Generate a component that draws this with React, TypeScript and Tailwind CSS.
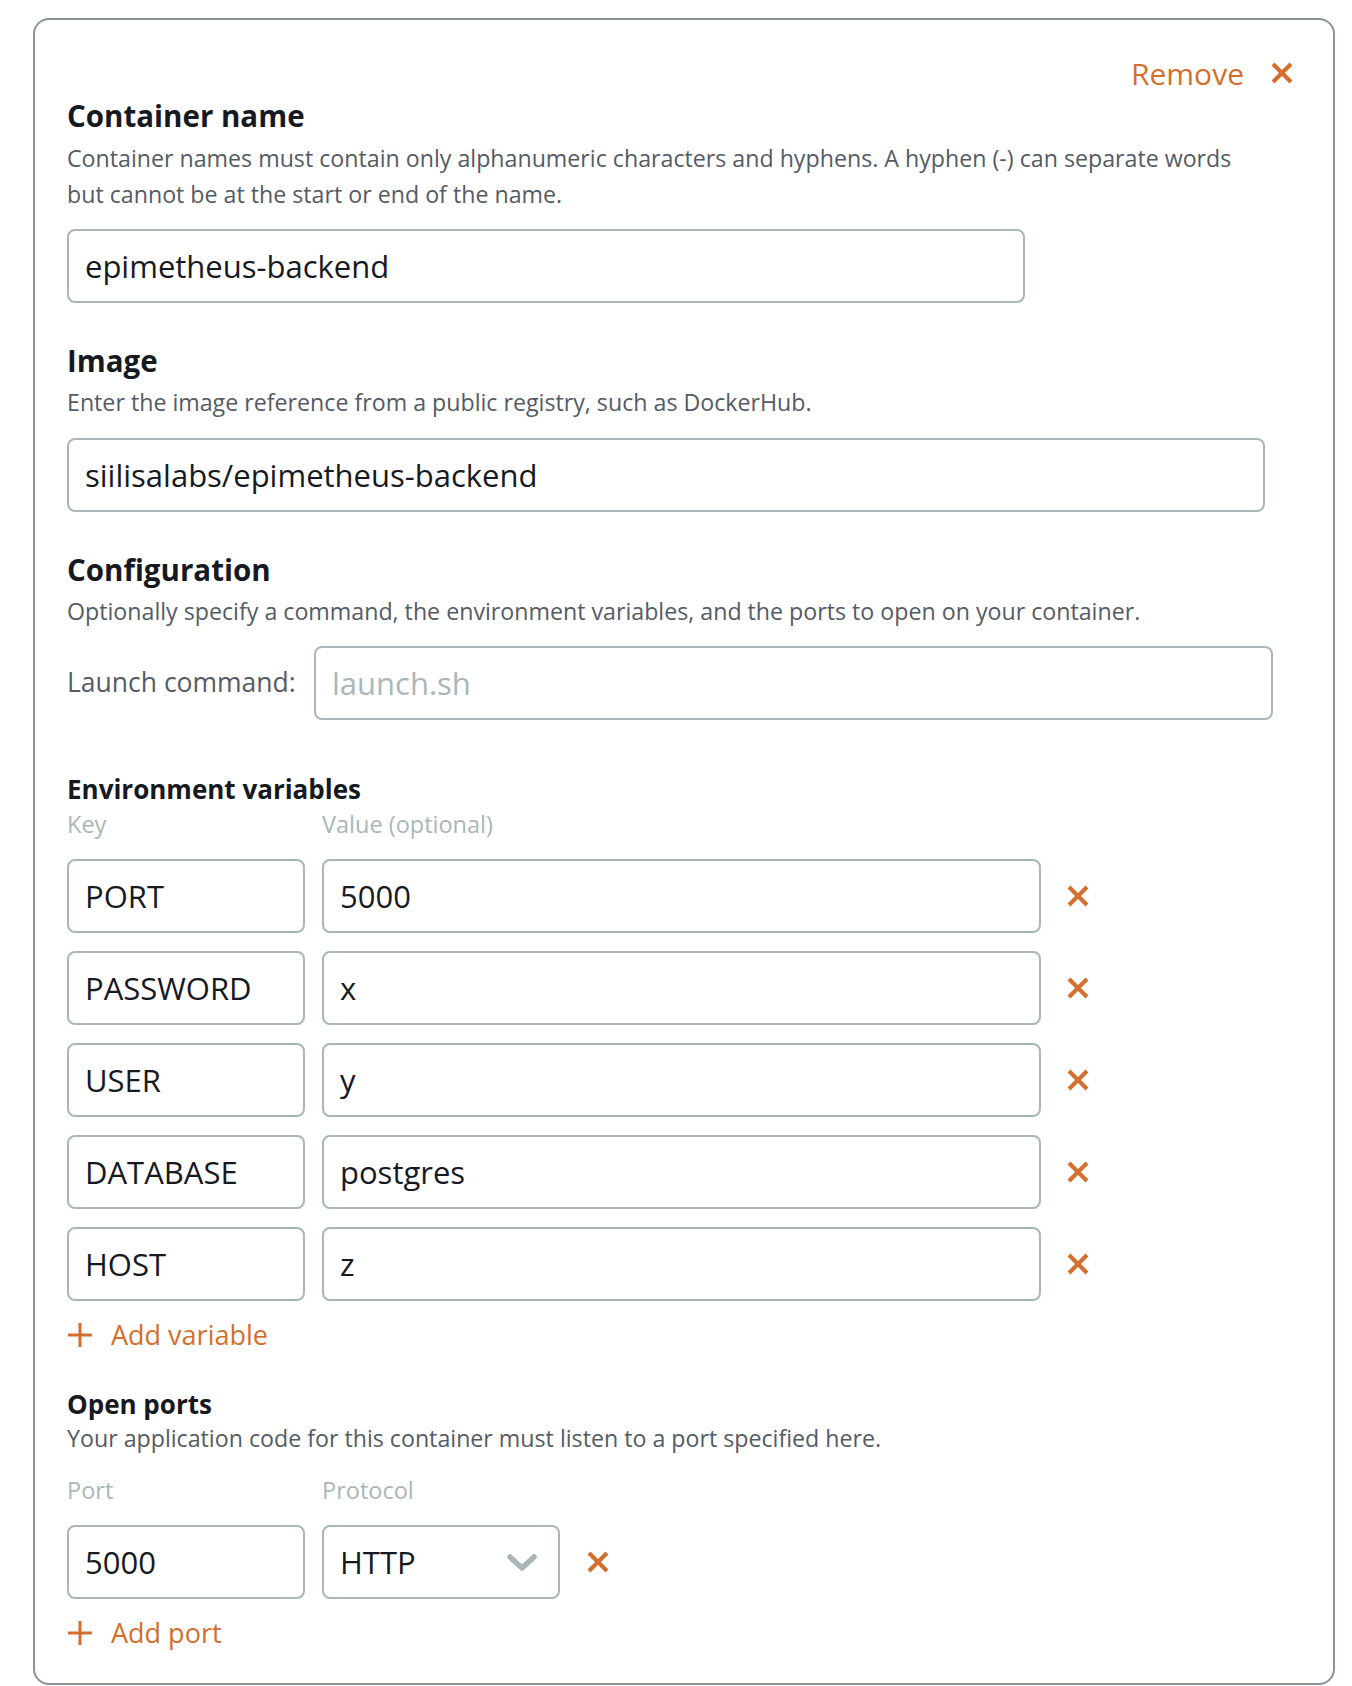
import React from "react";

const ORANGE = "#d26f2e";

const XIcon = ({ size = 24 }: { size?: number }) => (
  <svg width={size} height={size} viewBox="0 0 24 24" fill="none">
    <path d="M3 3L21 21M21 3L3 21" stroke={ORANGE} strokeWidth="4.2" />
  </svg>
);

const PlusIcon = () => (
  <svg width="26" height="26" viewBox="0 0 26 26" fill="none">
    <path d="M13 1V25M1 13H25" stroke={ORANGE} strokeWidth="3" />
  </svg>
);

const Chevron = () => (
  <svg width="32" height="19" viewBox="0 0 32 19" fill="none">
    <path
      d="M4 4L16 15L28 4"
      stroke="#aab7b8"
      strokeWidth="5.5"
      strokeLinecap="round"
      strokeLinejoin="round"
    />
  </svg>
);

const Field = ({
  value,
  placeholder,
  className = "",
}: {
  value?: string;
  placeholder?: string;
  className?: string;
}) => (
  <div
    className={`h-[74px] flex items-center border-2 border-[#aab7b8] rounded-[8px] px-[16px] text-[31px] ${className}`}
  >
    {value ? (
      <span className="text-[#16191f]">{value}</span>
    ) : (
      <span className="text-[#aab7b8]">{placeholder}</span>
    )}
  </div>
);

const envVars = [
  { key: "PORT", value: "5000" },
  { key: "PASSWORD", value: "x" },
  { key: "USER", value: "y" },
  { key: "DATABASE", value: "postgres" },
  { key: "HOST", value: "z" },
];

const AddLink = ({ label }: { label: string }) => (
  <div className="flex items-center h-[36px] mt-[16px] cursor-pointer">
    <PlusIcon />
    <span className="ml-[18px] text-[27px] leading-[36px]" style={{ color: ORANGE }}>
      {label}
    </span>
  </div>
);

export default function App() {
  return (
    <div
      className="bg-white min-h-[1686px] pt-[18px] pl-[33px] pr-[17px]"
      style={{ fontFamily: '"Open Sans", "Liberation Sans", sans-serif' }}
    >
      <div className="border-2 border-[#879596] rounded-[16px] pl-[32px] pr-[39px] pt-[33px] pb-[32px]">
        {/* remove */}
        <div className="h-[40px] flex items-center justify-end">
          <span className="text-[30px]" style={{ color: ORANGE }}>
            Remove
          </span>
          <span className="ml-[26px]">
            <XIcon />
          </span>
        </div>

        {/* container name */}
        <h2 className="mt-[6px] text-[29.5px] leading-[34px] font-bold text-[#16191f]">
          Container name
        </h2>
        <p className="mt-[7px] text-[23.2px] leading-[36px] text-[#545b64] w-[1185px]">
          Container names must contain only alphanumeric characters and hyphens. A hyphen (-) can
          separate words but cannot be at the start or end of the name.
        </p>
        <Field value="epimetheus-backend" className="mt-[17px] w-[958px] h-[73px]" />

        {/* image */}
        <h2 className="mt-[41px] text-[29.5px] leading-[34px] font-bold text-[#16191f]">Image</h2>
        <p className="mt-[6px] text-[23.2px] leading-[36px] text-[#545b64]">
          Enter the image reference from a public registry, such as DockerHub.
        </p>
        <Field value="siilisalabs/epimetheus-backend" className="mt-[18px] w-[1198px]" />

        {/* configuration */}
        <h2 className="mt-[41px] text-[29.5px] leading-[34px] font-bold text-[#16191f]">
          Configuration
        </h2>
        <p className="mt-[6px] text-[23.2px] leading-[36px] text-[#545b64]">
          Optionally specify a command, the environment variables, and the ports to open on your
          container.
        </p>
        <div className="mt-[17px] flex items-center">
          <span className="w-[247px] text-[26.5px] text-[#545b64]">Launch command:</span>
          <Field placeholder="launch.sh" className="w-[959px]" />
        </div>

        {/* env vars */}
        <h3 className="mt-[54px] text-[26px] leading-[30px] font-bold text-[#16191f]">
          Environment variables
        </h3>
        <div className="mt-[5px] flex text-[23.5px] leading-[30px] text-[#aab7b8]">
          <span className="w-[255px]">Key</span>
          <span>Value (optional)</span>
        </div>
        <div className="mt-[20px] flex flex-col gap-[18px]">
          {envVars.map((v) => (
            <div key={v.key} className="flex items-center">
              <Field value={v.key} className="w-[238px]" />
              <Field value={v.value} className="ml-[17px] w-[719px]" />
              <span className="ml-[25px]">
                <XIcon />
              </span>
            </div>
          ))}
        </div>
        <AddLink label="Add variable" />

        {/* open ports */}
        <h3 className="mt-[36px] text-[26px] leading-[30px] font-bold text-[#16191f]">
          Open ports
        </h3>
        <p className="mt-[1px] text-[23.2px] leading-[36px] text-[#545b64]">
          Your application code for this container must listen to a port specified here.
        </p>
        <div className="mt-[19px] flex text-[23.5px] leading-[30px] text-[#aab7b8]">
          <span className="w-[255px]">Port</span>
          <span>Protocol</span>
        </div>
        <div className="mt-[20px] flex items-center">
          <Field value="5000" className="w-[238px]" />
          <div className="ml-[17px] w-[238px] h-[74px] flex items-center justify-between border-2 border-[#aab7b8] rounded-[8px] pl-[16px] pr-[20px] text-[31px] text-[#16191f]">
            <span>HTTP</span>
            <Chevron />
          </div>
          <span className="ml-[26px]">
            <XIcon />
          </span>
        </div>
        <AddLink label="Add port" />
      </div>
    </div>
  );
}
